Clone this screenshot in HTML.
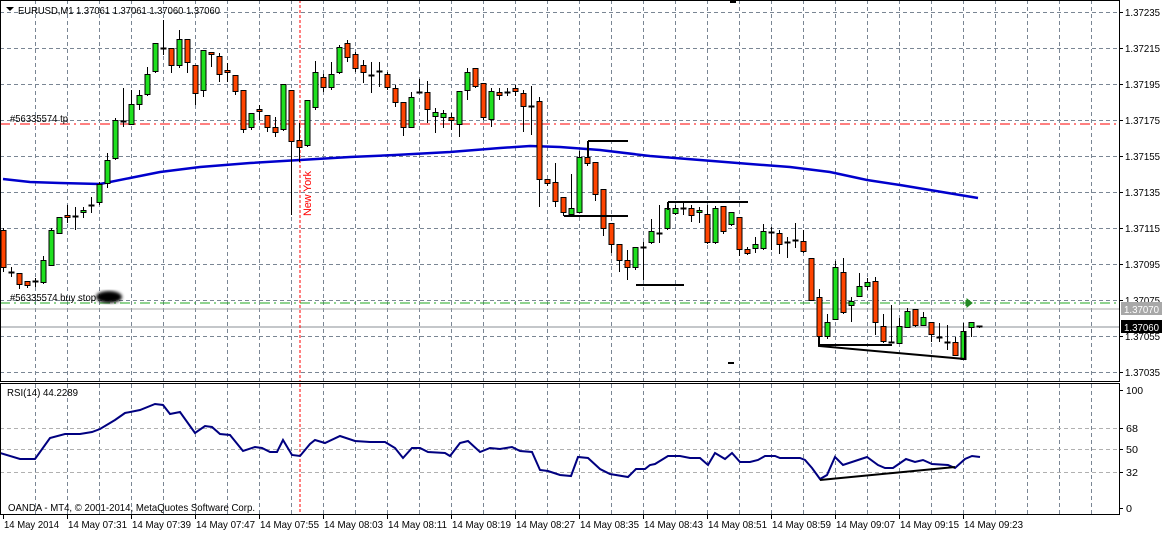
<!DOCTYPE html>
<html><head><meta charset="utf-8"><style>
html,body{margin:0;padding:0;background:#fff;width:1162px;height:533px;overflow:hidden}
svg{display:block;font-family:"Liberation Sans",sans-serif}
</style></head><body>
<svg id="c" width="1162" height="533" xmlns="http://www.w3.org/2000/svg">
<defs><filter id="bl"><feGaussianBlur stdDeviation="1.5"/></filter></defs>
<rect width="1162" height="533" fill="#fff"/>
<g id="grid"></g>
<line x1="0" y1="124" x2="1119" y2="124" stroke="#ff0000" stroke-width="1" stroke-dasharray="10,4,2,4"/>
<line x1="0" y1="303" x2="1119" y2="303" stroke="#22aa22" stroke-width="1" stroke-dasharray="10,4,2,4"/>
<line x1="0" y1="309" x2="1119" y2="309" stroke="#a8a8a8" stroke-width="1"/>
<line x1="0" y1="327" x2="1119" y2="327" stroke="#8a8f96" stroke-width="1"/>
<line x1="300" y1="0" x2="300" y2="381" stroke="#ff0000" stroke-dasharray="3,2"/>
<line x1="300" y1="384" x2="300" y2="514" stroke="#ff0000" stroke-dasharray="3,2"/>
<text transform="translate(311,216) rotate(-90)" font-size="11" fill="#ff0000" textLength="45">New York</text>
<polyline fill="none" stroke="#0000cc" stroke-width="2.5" points="3,179 30,182 60,183 100,184 130,178 160,172 200,167 250,163 300,160 350,157 395,155 450,152 500,148 530,146 560,147 600,150 650,156 700,160 750,164 790,167 830,172 867,180 900,185 930,190 978,198"/>
<g id="cand"></g>
<g stroke="#000" stroke-width="2" fill="none">
<line x1="588" y1="141" x2="628" y2="141"/><line x1="588" y1="141" x2="588" y2="158"/>
<line x1="564" y1="216" x2="628" y2="216"/>
<line x1="636" y1="285" x2="684" y2="285"/>
<line x1="668" y1="202" x2="748" y2="202"/><line x1="668" y1="202" x2="668" y2="210"/>
<line x1="819" y1="345" x2="892" y2="345"/>
<polyline points="819,336 819,346 965,359 965,331"/>
<line x1="730" y1="2" x2="736" y2="2"/><line x1="728" y1="363" x2="734" y2="363"/>
</g>
<path d="M972,303 l-5,-4 v8 z M966,300 v6" fill="#228822" stroke="#228822"/>
<polyline fill="none" stroke="#000080" stroke-width="2" points="0,453 20,459 35,459 50,438 65,434 80,434 92,432 100,429 115,420 125,413 140,410 155,404 163,405 170,414 180,412 195,433 205,426 212,427 220,434 230,435 243,451 255,447 262,448 270,452 277,452 283,440 292,455 300,456 310,444 315,440 325,443 340,436 355,441 370,442 385,442 395,448 403,458 412,448 420,448 428,452 445,453 450,456 460,443 468,441 480,452 490,448 500,449 512,447 520,451 532,452 540,470 548,471 560,475 571,476 578,457 588,458 600,469 610,474 628,477 636,469 645,469 650,465 655,464 668,456 680,456 690,458 700,458 708,465 715,453 725,459 732,453 740,462 750,462 758,460 765,456 775,456 780,458 790,458 800,458 805,460 812,468 820,479 827,475 835,457 843,465 855,461 867,457 878,465 885,468 893,468 906,459 915,462 923,460 932,464 948,465 955,468 965,459 972,456 980,457"/>
<line x1="820" y1="480" x2="955" y2="467" stroke="#000" stroke-width="2"/>
<g stroke="#000" stroke-width="1" fill="none">
<rect x="0.5" y="0.5" width="1119" height="381"/>
<rect x="0.5" y="383.5" width="1119" height="131"/>
</g>
<g id="axis" font-size="10.5" fill="#000"></g>
<path d="M6,7 h8 l-4,4 z" fill="#000"/>
<g font-size="10.5">
<text x="18" y="14" textLength="202" lengthAdjust="spacingAndGlyphs">EURUSD,M1  1.37061 1.37061 1.37060 1.37060</text>
<text x="10" y="122" textLength="58" lengthAdjust="spacingAndGlyphs">#56335574 tp</text>
<text x="10" y="301" textLength="86" lengthAdjust="spacingAndGlyphs">#56335574 buy stop</text>
<text x="7" y="396" textLength="71" lengthAdjust="spacingAndGlyphs">RSI(14) 44.2289</text>
<text x="8" y="511" textLength="247" lengthAdjust="spacingAndGlyphs">OANDA - MT4, © 2001-2014, MetaQuotes Software Corp.</text>
</g>
<ellipse cx="109" cy="297" rx="13" ry="6" fill="#000" filter="url(#bl)"/>
<rect x="1121" y="302" width="41" height="13" fill="#a8a8a8"/>
<rect x="1121" y="320" width="41" height="13" fill="#000"/>
<text x="1124" y="313" font-size="10.5" fill="#fff" textLength="35" lengthAdjust="spacingAndGlyphs">1.37070</text>
<text x="1124" y="331" font-size="10.5" fill="#fff" textLength="35" lengthAdjust="spacingAndGlyphs">1.37060</text>
</svg>
<script>
var NS="http://www.w3.org/2000/svg";
function el(p,t,a){var e=document.createElementNS(NS,t);for(var k in a)e.setAttribute(k,a[k]);p.appendChild(e);return e;}
var g=document.getElementById('grid');
for(var y=12;y<=372;y+=36)el(g,'line',{x1:0,y1:y+.5,x2:1119,y2:y+.5,stroke:'#7a8694','stroke-dasharray':'4,3'});
for(var x=35;x<1119;x+=32){el(g,'line',{x1:x+.5,y1:0,x2:x+.5,y2:381,stroke:'#7a8694','stroke-dasharray':'4,3'});el(g,'line',{x1:x+.5,y1:384,x2:x+.5,y2:514,stroke:'#7a8694','stroke-dasharray':'4,3'});}
[428,449,472].forEach(function(y){el(g,'line',{x1:0,y1:y+.5,x2:1119,y2:y+.5,stroke:'#b0b0b0','stroke-dasharray':'4,3'});});
var a=document.getElementById('axis');
var pr=['1.37235','1.37215','1.37195','1.37175','1.37155','1.37135','1.37115','1.37095','1.37075','1.37055','1.37035'];
pr.forEach(function(p,i){var y=12+36*i;el(a,'line',{x1:1119,y1:y+.5,x2:1123,y2:y+.5,stroke:'#000'});var t=el(a,'text',{x:1125,y:y+4,textLength:35,lengthAdjust:'spacingAndGlyphs'});t.textContent=p;});
[['100',390,17],['68',428,12],['50',449,12],['32',472,12],['0',508,6]].forEach(function(v){el(a,'line',{x1:1119,y1:v[1]+.5,x2:1123,y2:v[1]+.5,stroke:'#000'});var t=el(a,'text',{x:1126,y:v[1]+4,textLength:v[2],lengthAdjust:'spacingAndGlyphs'});t.textContent=v[0];});
var tl=['14 May 2014','14 May 07:31','14 May 07:39','14 May 07:47','14 May 07:55','14 May 08:03','14 May 08:11','14 May 08:19','14 May 08:27','14 May 08:35','14 May 08:43','14 May 08:51','14 May 08:59','14 May 09:07','14 May 09:15','14 May 09:23'];
tl.forEach(function(s,i){var x=3+64*i;el(a,'line',{x1:x+.5,y1:514,x2:x+.5,y2:519,stroke:'#000'});var t=el(a,'text',{x:x+1,y:528,textLength:(i==0?55:59),lengthAdjust:'spacingAndGlyphs'});t.textContent=s;});
var D=[[230,267,228,272],[272,272,267,277],[273,284,273,289],[281,285,281,288],[282,281,278,287],[282,260,256,284],[265,230,228,265],[233,217,217,233],[215,217,205,223],[216,216,207,230],[212,210,207,218],[205,205,197,213],[202,184,182,205],[183,160,153,188],[158,120,118,160],[121,121,88,127],[124,104,90,124],[104,95,90,110],[94,74,67,96],[71,43,43,73],[48,48,20,55],[48,65,48,73],[65,39,30,68],[39,62,39,73],[65,93,65,105],[90,50,50,97],[52,54,52,67],[56,74,53,82],[70,72,63,82],[75,91,75,95],[90,129,90,133],[127,113,113,130],[109,111,105,120],[115,127,115,132],[127,132,117,137],[129,84,84,131],[90,141,90,215],[140,147,123,162],[145,100,100,147],[107,72,61,110],[77,87,74,92],[87,74,62,90],[72,47,45,74],[43,57,40,62],[54,68,52,72],[65,72,60,83],[75,75,62,93],[71,72,62,87],[74,87,72,90],[88,102,85,107],[102,127,102,136],[127,97,92,127],[92,92,79,93],[92,109,81,123],[116,112,108,133],[117,113,110,128],[117,120,113,130],[124,91,91,137],[90,72,68,100],[68,86,68,88],[83,117,83,120],[119,91,88,127],[92,95,88,100],[93,92,88,96],[88,91,85,96],[93,106,90,132],[106,106,86,135],[101,179,97,207],[179,183,179,186],[182,201,163,207],[197,212,197,216],[214,208,174,216],[212,157,151,213],[157,163,157,166],[162,194,162,201],[189,228,189,236],[223,244,223,253],[244,260,244,272],[260,267,250,280],[267,247,247,270],[248,247,242,280],[242,231,219,244],[233,233,205,243],[228,208,204,230],[213,208,205,215],[208,208,202,215],[208,215,205,222],[212,210,207,223],[214,242,205,244],[242,208,206,244],[206,231,206,234],[224,212,212,226],[217,249,217,256],[249,253,247,255],[248,244,237,253],[248,231,224,250],[232,232,227,250],[233,244,230,254],[242,242,237,258],[240,240,223,248],[241,251,230,253],[258,300,258,300],[297,336,289,338],[336,322,314,339],[319,267,261,320],[272,312,258,314],[305,301,297,322],[296,286,273,296],[286,282,278,290],[281,322,277,335],[326,341,314,343],[342,342,305,343],[343,326,318,344],[327,311,308,328],[309,325,309,327],[325,317,312,326],[322,334,322,342],[337,337,323,342],[342,342,325,350],[342,355,337,356],[359,331,323,360],[327,322,322,337],[326,327,326,328]];
var cg=document.getElementById('cand');
D.forEach(function(d,i){var x=3+8*i;var o=d[0],c=d[1],h=Math.min(d[2],o,c),l=Math.max(d[3],o,c);
el(cg,'line',{x1:x+.5,y1:h,x2:x+.5,y2:l,stroke:'#000'});
var top=Math.min(o,c),bh=Math.abs(o-c);
if(bh<2){el(cg,'rect',{x:x-2.5,y:top-0.5,width:6,height:2,fill:'#000'});}
else el(cg,'rect',{x:x-2,y:top+.5,width:5,height:bh,fill:(c<o?'#1fe01f':'#ff4400'),stroke:'#000'});
});
</script>
</body></html>
